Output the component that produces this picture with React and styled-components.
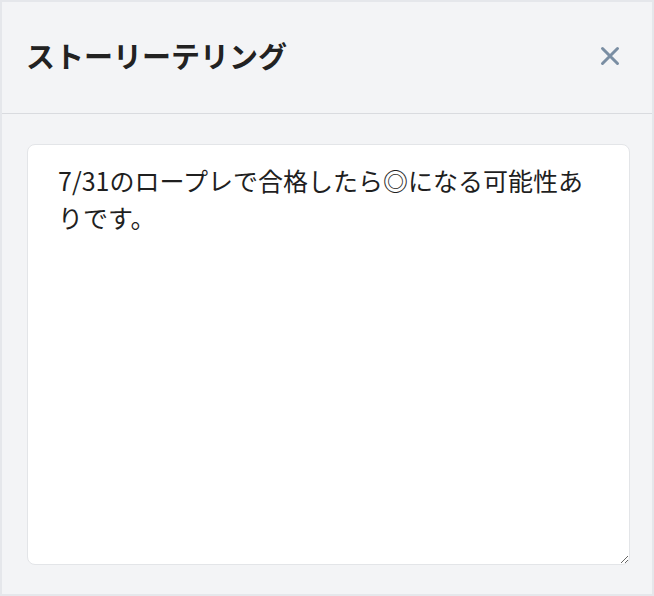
import styled, { createGlobalStyle } from "styled-components"

const GlobalStyle = createGlobalStyle`
    html, body {
        margin: 0;
        padding: 0;
        background: #ffffff;
    }
    * {
        box-sizing: border-box;
    }
`;
const Panel = styled.div`
    width: 654px;
    height: 596px;
    background-color: #f3f4f6;
    border: 2px solid #e5e7eb;
    display: flex;
    flex-direction: column;
    font-family: "Noto Sans CJK JP", "Noto Sans", sans-serif;
    color: #222222;
`;
const Header = styled.div`
    height: 112px;
    flex-shrink: 0;
    display: flex;
    align-items: center;
    justify-content: space-between;
    padding: 0 24px 0 24px;
    border-bottom: 1px solid #d9dbdf;
`;
const Title = styled.h2`
    margin: 0;
    margin-top: -4px;
    font-size: 29px;
    font-weight: 700;
    line-height: 1;
    color: #222222;
`;
const CloseButton = styled.button`
    width: 36px;
    height: 36px;
    margin-top: -3px;
    display: flex;
    align-items: center;
    justify-content: center;
    padding: 0;
    border: none;
    background: transparent;
    color: #7a8ea3;
    cursor: pointer;
`;
const Body = styled.div`
    flex: 1;
    padding: 30px 22px 29px 25px;
    display: flex;
`;
const Notes = styled.textarea`
    width: 100%;
    height: 100%;
    margin: 0;
    padding: 17px 30px;
    border: 1px solid #e3e5e8;
    border-radius: 8px;
    background: #ffffff;
    font-family: "Noto Sans CJK JP", "Noto Sans", sans-serif;
    font-size: 25px;
    line-height: 37px;
    color: #1f1f1f;
    resize: vertical;
    outline: none;
`;

export default function App() {
    return (
        <>
            <GlobalStyle />
            <Panel>
                <Header>
                    <Title>ストーリーテリング</Title>
                    <CloseButton aria-label="閉じる">
                        <svg width="22" height="22" viewBox="0 0 22 22" fill="none" stroke="currentColor" strokeWidth="3" strokeLinecap="round">
                            <path d="M3.5 3.5 L18.5 18.5 M18.5 3.5 L3.5 18.5" />
                        </svg>
                    </CloseButton>
                </Header>
                <Body>
                    <Notes defaultValue="7/31のロープレで合格したら◎になる可能性ありです。" />
                </Body>
            </Panel>
        </>
    )
}
